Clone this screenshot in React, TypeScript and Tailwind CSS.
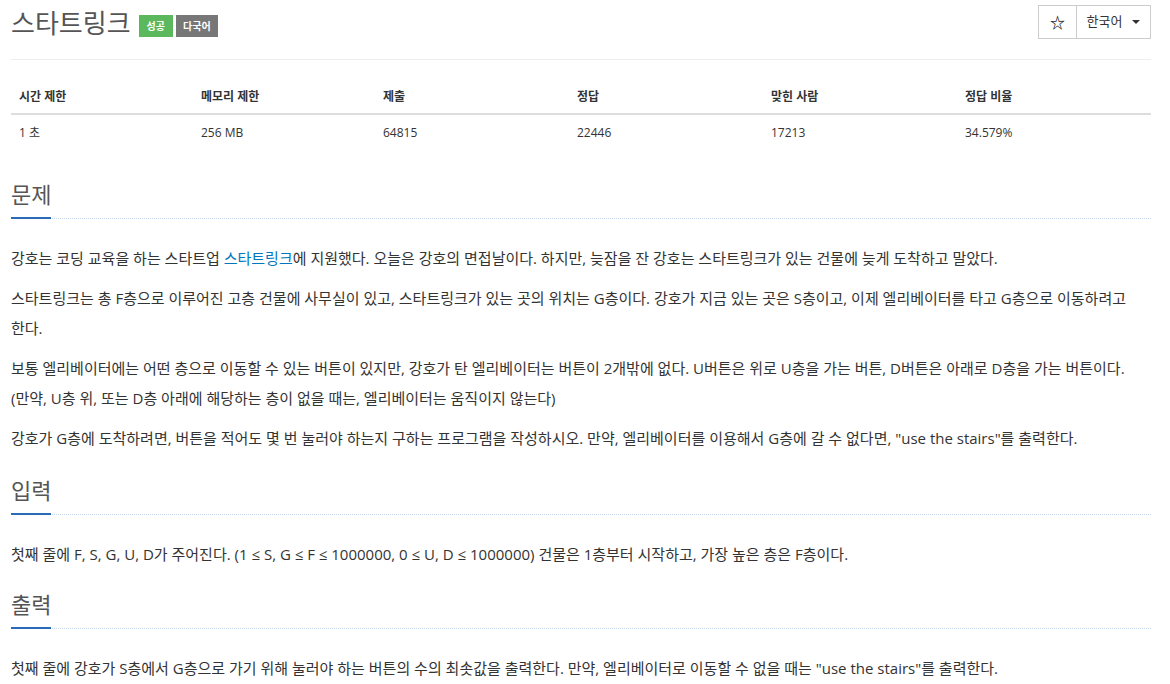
const font = { fontFamily: '"Open Sans", "Noto Sans CJK KR", sans-serif' };

const stats = [
  { label: "시간 제한", value: "1 초" },
  { label: "메모리 제한", value: "256 MB" },
  { label: "제출", value: "64815" },
  { label: "정답", value: "22446" },
  { label: "맞힌 사람", value: "17213" },
  { label: "정답 비율", value: "34.579%" },
];

const colWidths = ["w-[182px]", "w-[182px]", "w-[194px]", "w-[194px]", "w-[194px]", "w-[194px]"];

function Headline({ title }: { title: string }) {
  return (
    <div className="border-b border-dotted border-[#c5d7ea]">
      <h2 className="text-[22px] leading-[24px] text-[#555] font-normal">
        <span className="inline-block border-b-2 border-[#2a6bb8] pb-[11px] -mb-px">{title}</span>
      </h2>
    </div>
  );
}

export default function App() {
  return (
    <div className="bg-white min-h-[684px] text-[#333]" style={font}>
      <div className="ml-[11px] w-[1140px]">
        {/* header */}
        <div className="h-[60px] border-b border-[#eee] flex items-start justify-between">
          <div className="flex items-center gap-[8px] pt-[9px]">
            <h1 className="text-[26px] leading-[28px] text-[#555] font-normal">스타트링크</h1>
            <div className="flex gap-[3px] mt-[6px]">
              <span className="bg-[#5cb85c] text-white text-[10px] font-bold leading-[22px] px-[8px]">성공</span>
              <span className="bg-[#777] text-white text-[10px] font-bold leading-[22px] px-[7px]">다국어</span>
            </div>
          </div>
          <div className="flex mt-[5px] border border-[#ccc] text-[13px] text-[#333] h-[34px]">
            <div className="w-[38px] flex items-center justify-center border-r border-[#ccc]">
              <span className="text-[15px] font-bold text-[#222]">☆</span>
            </div>
            <div className="w-[73px] flex items-center justify-center gap-[10px]">
              <span>한국어</span>
              <span className="w-0 h-0 border-l-[4px] border-r-[4px] border-t-[4px] border-l-transparent border-r-transparent border-t-[#333]" />
            </div>
          </div>
        </div>

        {/* stats table */}
        <table className="mt-[20px] w-[1140px] text-[12px] border-collapse table-fixed">
          <thead>
            <tr className="border-b-2 border-[#ddd]">
              {stats.map((s, i) => (
                <th key={s.label} className={`${colWidths[i]} text-left font-bold px-[8px] h-[34px]`}>{s.label}</th>
              ))}
            </tr>
          </thead>
          <tbody>
            <tr>
              {stats.map((s) => (
                <td key={s.label} className="px-[8px] h-[36px]">{s.value}</td>
              ))}
            </tr>
          </tbody>
        </table>

        {/* problem */}
        <section className="mt-[32px]">
          <Headline title="문제" />
          <div className="mt-[24px] text-[15px] leading-[30px] break-keep">
            <p className="mb-[10px]">
              강호는 코딩 교육을 하는 스타트업 <span className="text-[#0076c0]">스타트링크</span>에 지원했다. 오늘은 강호의 면접날이다. 하지만, 늦잠을 잔 강호는 스타트링크가 있는 건물에 늦게 도착하고 말았다.
            </p>
            <p className="mb-[10px]">
              스타트링크는 총 F층으로 이루어진 고층 건물에 사무실이 있고, 스타트링크가 있는 곳의 위치는 G층이다. 강호가 지금 있는 곳은 S층이고, 이제 엘리베이터를 타고 G층으로 이동하려고 한다.
            </p>
            <p className="mb-[10px]">
              보통 엘리베이터에는 어떤 층으로 이동할 수 있는 버튼이 있지만, 강호가 탄 엘리베이터는 버튼이 2개밖에 없다. U버튼은 위로 U층을 가는 버튼, D버튼은 아래로 D층을 가는 버튼이다. (만약, U층 위, 또는 D층 아래에 해당하는 층이 없을 때는, 엘리베이터는 움직이지 않는다)
            </p>
            <p>
              강호가 G층에 도착하려면, 버튼을 적어도 몇 번 눌러야 하는지 구하는 프로그램을 작성하시오. 만약, 엘리베이터를 이용해서 G층에 갈 수 없다면, "use the stairs"를 출력한다.
            </p>
          </div>
        </section>

        <section className="mt-[25px]">
          <Headline title="입력" />
          <div className="mt-[24px] text-[15px] leading-[30px] break-keep">
            <p>
              첫째 줄에 F, S, G, U, D가 주어진다. (1 ≤ S, G ≤ F ≤ 1000000, 0 ≤ U, D ≤ 1000000) 건물은 1층부터 시작하고, 가장 높은 층은 F층이다.
            </p>
          </div>
        </section>

        <section className="mt-[23px]">
          <Headline title="출력" />
          <div className="mt-[24px] text-[15px] leading-[30px] break-keep">
            <p>
              첫째 줄에 강호가 S층에서 G층으로 가기 위해 눌러야 하는 버튼의 수의 최솟값을 출력한다. 만약, 엘리베이터로 이동할 수 없을 때는 "use the stairs"를 출력한다.
            </p>
          </div>
        </section>
      </div>
    </div>
  );
}
